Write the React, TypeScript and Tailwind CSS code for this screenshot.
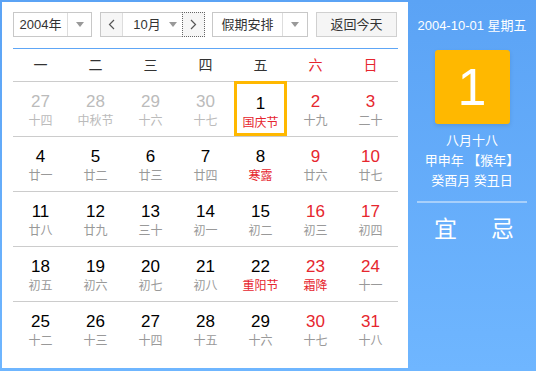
import React from "react";

type Day = { d: number; lunar: string; other?: boolean; red?: boolean; lunarRed?: boolean; sel?: boolean };

const weeks: Day[][] = [
  [
    { d: 27, lunar: "十四", other: true },
    { d: 28, lunar: "中秋节", other: true },
    { d: 29, lunar: "十六", other: true },
    { d: 30, lunar: "十七", other: true },
    { d: 1, lunar: "国庆节", lunarRed: true, sel: true },
    { d: 2, lunar: "十九", red: true },
    { d: 3, lunar: "二十", red: true },
  ],
  [
    { d: 4, lunar: "廿一" },
    { d: 5, lunar: "廿二" },
    { d: 6, lunar: "廿三" },
    { d: 7, lunar: "廿四" },
    { d: 8, lunar: "寒露", lunarRed: true },
    { d: 9, lunar: "廿六", red: true },
    { d: 10, lunar: "廿七", red: true },
  ],
  [
    { d: 11, lunar: "廿八" },
    { d: 12, lunar: "廿九" },
    { d: 13, lunar: "三十" },
    { d: 14, lunar: "初一" },
    { d: 15, lunar: "初二" },
    { d: 16, lunar: "初三", red: true },
    { d: 17, lunar: "初四", red: true },
  ],
  [
    { d: 18, lunar: "初五" },
    { d: 19, lunar: "初六" },
    { d: 20, lunar: "初七" },
    { d: 21, lunar: "初八" },
    { d: 22, lunar: "重阳节", lunarRed: true },
    { d: 23, lunar: "霜降", red: true, lunarRed: true },
    { d: 24, lunar: "十一", red: true },
  ],
  [
    { d: 25, lunar: "十二" },
    { d: 26, lunar: "十三" },
    { d: 27, lunar: "十四" },
    { d: 28, lunar: "十五" },
    { d: 29, lunar: "十六" },
    { d: 30, lunar: "十七", red: true },
    { d: 31, lunar: "十八", red: true },
  ],
];

const heads = ["一", "二", "三", "四", "五", "六", "日"];

function Caret() {
  return <span className="w-0 h-0 border-x-[4px] border-x-transparent border-t-[5px] border-t-[#999]" />;
}

export default function App() {
  return (
    <div
      className="w-[536px] h-[371px] flex bg-gradient-to-b from-[#5ba3f5] to-[#6fb6ff] text-[#333]"
      style={{ fontFamily: '"Liberation Sans", "Noto Sans CJK SC", sans-serif' }}
    >
      {/* 左侧日历 */}
      <div className="ml-[2px] mt-[2px] mb-[3px] w-[406px] bg-white pl-[11px] pr-[10px] pt-[10px]">
        <div className="flex h-[25px] text-[13px]">
          <div className="w-[79px] flex border border-[#c8c8c8]">
            <div className="flex-1 flex items-center justify-center">2004年</div>
            <div className="w-[24px] border-l border-[#ddd] flex items-center justify-center"><Caret /></div>
          </div>
          <div className="ml-[8px] w-[105px] flex border border-[#c8c8c8]">
            <div className="w-[22px] bg-[#f6f6f6] border-r border-[#ddd] flex items-center justify-center text-[#666]">
              <svg width="7" height="11" viewBox="0 0 7 11"><path d="M6 1L1.5 5.5L6 10" fill="none" stroke="#555" strokeWidth="1.2" /></svg>
            </div>
            <div className="flex-1 flex items-center justify-center gap-[8px] pl-[4px]">10月<Caret /></div>
            <div className="w-[23px] bg-[#f6f6f6] border border-dotted border-[#666] -m-px flex items-center justify-center">
              <svg width="7" height="11" viewBox="0 0 7 11"><path d="M1 1L5.5 5.5L1 10" fill="none" stroke="#555" strokeWidth="1.2" /></svg>
            </div>
          </div>
          <div className="ml-[7px] w-[96px] flex border border-[#c8c8c8]">
            <div className="flex-1 flex items-center justify-center">假期安排</div>
            <div className="w-[25px] border-l border-[#ddd] flex items-center justify-center"><Caret /></div>
          </div>
          <div className="ml-[8px] w-[81px] border border-[#d0d0d0] bg-[#f5f5f5] flex items-center justify-center">返回今天</div>
        </div>

        <div className="mt-[11px] h-px bg-[#5ea6f6]" />

        <div className="grid grid-cols-7 h-[33px] border-b border-[#ccc] items-center text-[14px]">
          {heads.map((h, i) => (
            <div key={h} className={`text-center ${i >= 5 ? "text-[#e6262e]" : "text-[#333]"}`}>{h}</div>
          ))}
        </div>

        {weeks.map((w, wi) => (
          <div key={wi} className={`grid grid-cols-7 h-[55px] ${wi < 4 ? "border-b border-[#ccc]" : ""}`}>
            {w.map((c, ci) => (
              <div
                key={ci}
                className={`flex flex-col items-center pt-[9px] ${c.sel ? "border-[3px] border-[#ffb800] pt-[6px] -mt-px mx-[1px]" : ""}`}
              >
                <div
                  className={`text-[17px] leading-[22px] ${c.other ? "text-[#bbb]" : c.red ? "text-[#e6262e]" : "text-black"}`}
                >
                  {c.d}
                </div>
                <div
                  className={`text-[12px] leading-[16px] ${c.lunarRed ? "text-[#e6262e]" : c.other ? "text-[#bbb]" : "text-[#999]"}`}
                >
                  {c.lunar}
                </div>
              </div>
            ))}
          </div>
        ))}
      </div>

      {/* 右侧信息 */}
      <div className="flex-1 flex flex-col items-center text-white pt-[17px]">
        <div className="text-[13px] leading-[18px]">2004-10-01 星期五</div>
        <div className="mt-[15px] w-[75px] h-[74px] rounded-[3px] bg-[#ffb800] flex items-center justify-center text-[52px] font-light leading-none shadow-[0_2px_4px_rgba(0,0,0,0.1)]">
          1
        </div>
        <div className="mt-[7px] text-[13px] leading-[20px] text-center">
          <div>八月十八</div>
          <div>甲申年 【猴年】</div>
          <div>癸酉月 癸丑日</div>
        </div>
        <div className="mt-[10px] w-[110px] h-[2px] bg-[#a8d0fb]" />
        <div className="mt-[13px] ml-[4px] w-[80px] flex justify-between text-[23px] leading-[26px]">
          <span>宜</span>
          <span>忌</span>
        </div>
      </div>
    </div>
  );
}
